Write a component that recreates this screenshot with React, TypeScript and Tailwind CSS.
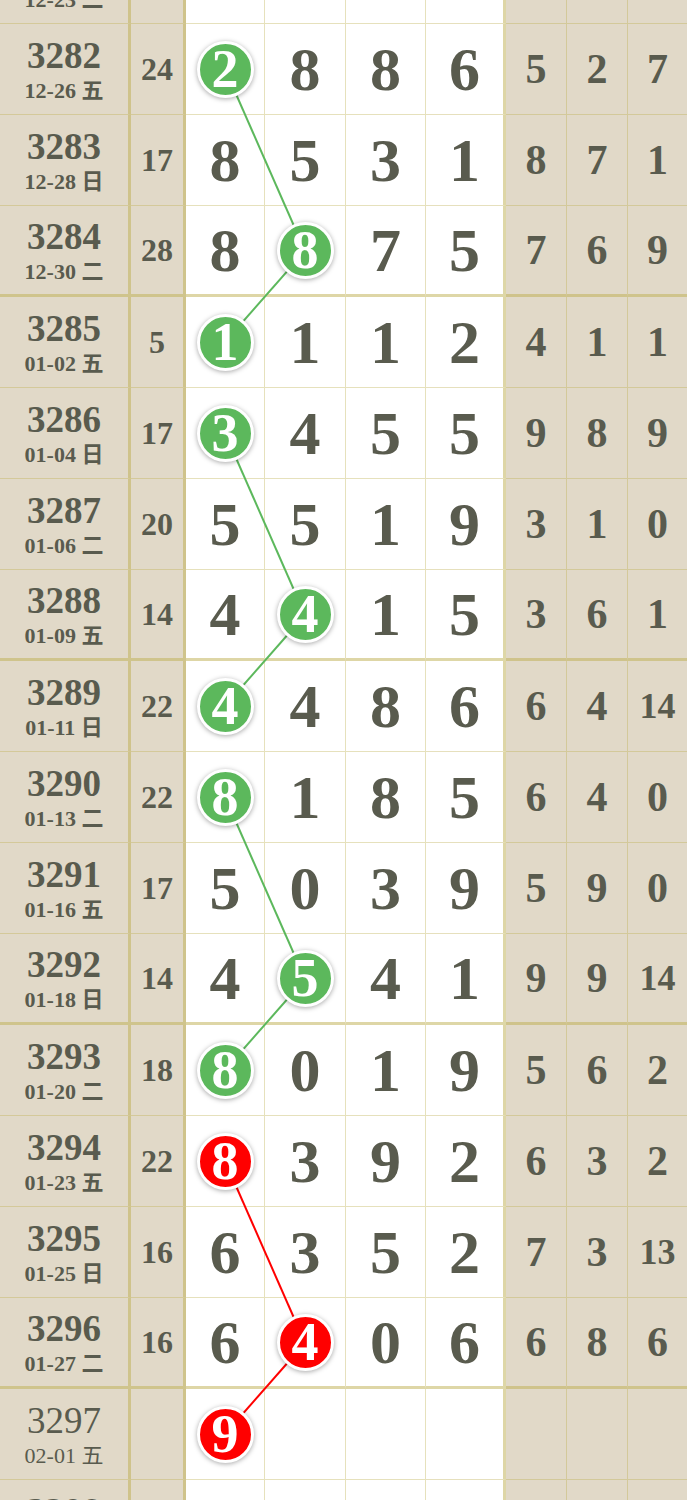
import React from "react";

type Row = {
  issue: string;
  date: string;
  sum: string;
  nums: string[];
  tail: string[];
  hit?: number;
  color?: "green" | "red";
  light?: boolean;
};

const rows: Row[] = [
  { issue: "3281", date: "12-23 二", sum: "", nums: ["", "", "", ""], tail: ["", "", ""] },
  { issue: "3282", date: "12-26 五", sum: "24", nums: ["2", "8", "8", "6"], tail: ["5", "2", "7"], hit: 0, color: "green" },
  { issue: "3283", date: "12-28 日", sum: "17", nums: ["8", "5", "3", "1"], tail: ["8", "7", "1"] },
  { issue: "3284", date: "12-30 二", sum: "28", nums: ["8", "8", "7", "5"], tail: ["7", "6", "9"], hit: 1, color: "green" },
  { issue: "3285", date: "01-02 五", sum: "5", nums: ["1", "1", "1", "2"], tail: ["4", "1", "1"], hit: 0, color: "green" },
  { issue: "3286", date: "01-04 日", sum: "17", nums: ["3", "4", "5", "5"], tail: ["9", "8", "9"], hit: 0, color: "green" },
  { issue: "3287", date: "01-06 二", sum: "20", nums: ["5", "5", "1", "9"], tail: ["3", "1", "0"] },
  { issue: "3288", date: "01-09 五", sum: "14", nums: ["4", "4", "1", "5"], tail: ["3", "6", "1"], hit: 1, color: "green" },
  { issue: "3289", date: "01-11 日", sum: "22", nums: ["4", "4", "8", "6"], tail: ["6", "4", "14"], hit: 0, color: "green" },
  { issue: "3290", date: "01-13 二", sum: "22", nums: ["8", "1", "8", "5"], tail: ["6", "4", "0"], hit: 0, color: "green" },
  { issue: "3291", date: "01-16 五", sum: "17", nums: ["5", "0", "3", "9"], tail: ["5", "9", "0"] },
  { issue: "3292", date: "01-18 日", sum: "14", nums: ["4", "5", "4", "1"], tail: ["9", "9", "14"], hit: 1, color: "green" },
  { issue: "3293", date: "01-20 二", sum: "18", nums: ["8", "0", "1", "9"], tail: ["5", "6", "2"], hit: 0, color: "green" },
  { issue: "3294", date: "01-23 五", sum: "22", nums: ["8", "3", "9", "2"], tail: ["6", "3", "2"], hit: 0, color: "red" },
  { issue: "3295", date: "01-25 日", sum: "16", nums: ["6", "3", "5", "2"], tail: ["7", "3", "13"] },
  { issue: "3296", date: "01-27 二", sum: "16", nums: ["6", "4", "0", "6"], tail: ["6", "8", "6"], hit: 1, color: "red" },
  { issue: "3297", date: "02-01 五", sum: "", nums: ["9", "", "", ""], tail: ["", "", ""], hit: 0, color: "red", light: true },
  { issue: "3298", date: "02-03 日", sum: "", nums: ["", "", "", ""], tail: ["", "", ""], light: true },
];

// lines between hit balls (row indexes)
const links: { from: number; to: number; color: string }[] = [
  { from: 1, to: 3, color: "#5cb85c" },
  { from: 3, to: 4, color: "#5cb85c" },
  { from: 5, to: 7, color: "#5cb85c" },
  { from: 7, to: 8, color: "#5cb85c" },
  { from: 9, to: 11, color: "#5cb85c" },
  { from: 11, to: 12, color: "#5cb85c" },
  { from: 13, to: 15, color: "#ff0000" },
  { from: 15, to: 16, color: "#ff0000" },
];

const colX = [225, 305, 386, 465];
const thick = new Set(["3284", "3288", "3292", "3296"]);

const Ball = ({ n, color }: { n: string; color: "green" | "red" }) => (
  <div
    className={`relative z-10 flex h-[57px] w-[57px] items-center justify-center rounded-full border-[3px] border-white text-[54px] font-bold leading-none text-white shadow-[0_1px_5px_rgba(0,0,0,0.35)] ${
      color === "green" ? "bg-[#5cb85c]" : "bg-[#ff0000]"
    }`}
  >
    {n}
  </div>
);

export default function App() {
  return (
    <div className="w-[687px] overflow-hidden bg-white font-['Liberation_Serif','Noto_Sans_CJK_SC',serif] text-[#595b4e]">
      <div className="relative -mt-[67px]">
        <div className="grid auto-rows-[91px] grid-cols-[131px_55px_79px_81px_80px_80px_61px_61px_59px]">
          {rows.map((r) => {
            const bb = thick.has(r.issue)
              ? "border-b-[3px] border-b-[rgba(190,175,80,0.5)]"
              : "border-b border-b-[rgba(190,175,80,0.38)]";
            return (
              <React.Fragment key={r.issue}>
                <div className={`flex flex-col items-center justify-center gap-[6px] border-r-[3px] border-r-[rgba(190,175,80,0.5)] bg-[#e1d9c8] ${bb}`}>
                  <div className={`text-[37px] leading-none ${r.light ? "font-normal" : "font-bold"}`}>{r.issue}</div>
                  <div className={`text-[22px] leading-none ${r.light ? "font-normal" : "font-bold"}`}>{r.date}</div>
                </div>
                <div className={`flex items-center justify-center border-r-[3px] border-r-[rgba(190,175,80,0.5)] bg-[#e1d9c8] text-[32px] font-bold leading-none ${bb}`}>
                  {r.sum}
                </div>
                {r.nums.map((n, i) => (
                  <div
                    key={i}
                    className={`flex items-center justify-center bg-white text-[62px] font-bold leading-none ${bb} ${
                      i === 3 ? "border-r-[3px] border-r-[rgba(190,175,80,0.5)]" : "border-r border-r-[rgba(190,175,80,0.38)]"
                    }`}
                  >
                    {r.hit === i && r.color ? <Ball n={n} color={r.color} /> : n}
                  </div>
                ))}
                {r.tail.map((n, i) => (
                  <div
                    key={i}
                    className={`flex items-center justify-center bg-[#e1d9c8] font-bold leading-none ${bb} ${
                      n.length > 1 ? "text-[36px]" : "text-[42px]"
                    } ${i < 2 ? "border-r border-r-[rgba(190,175,80,0.38)]" : ""}`}
                  >
                    {n}
                  </div>
                ))}
              </React.Fragment>
            );
          })}
        </div>
        <svg className="pointer-events-none absolute left-0 top-0 z-[5]" width={687} height={rows.length * 91}>
          {links.map((l, k) => {
            const a = rows[l.from];
            const b = rows[l.to];
            return (
              <line
                key={k}
                x1={colX[a.hit ?? 0]}
                y1={l.from * 91 + 45}
                x2={colX[b.hit ?? 0]}
                y2={l.to * 91 + 45}
                stroke={l.color}
                strokeWidth={2}
              />
            );
          })}
        </svg>
      </div>
    </div>
  );
}
